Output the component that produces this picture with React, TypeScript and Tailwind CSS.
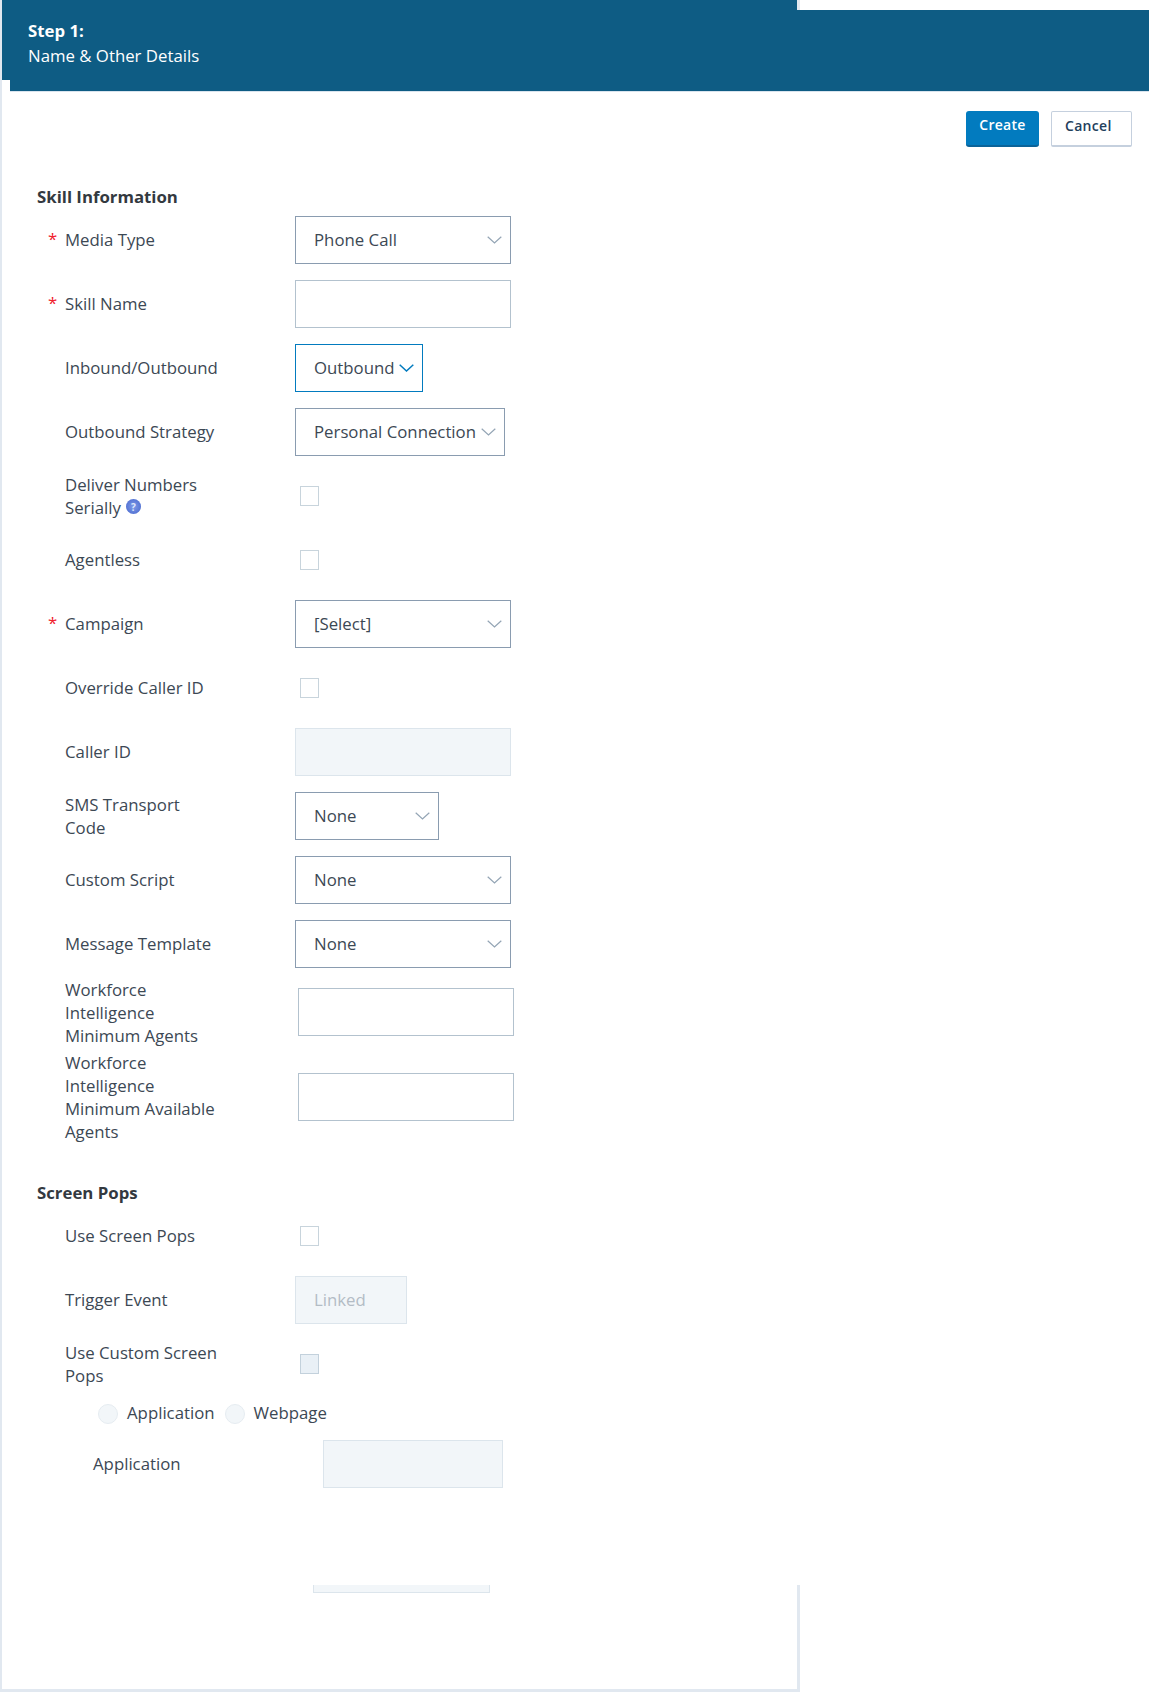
import { ReactNode } from 'react';

function Chevron({ active }: { active?: boolean }) {
  return (
    <svg
      width="15"
      height="8"
      viewBox="0 0 15 8"
      fill="none"
      className={active ? 'shrink-0 text-[#027bbf]' : 'shrink-0 text-[#94a5b5]'}
    >
      <path d="M0.7 0.7L7.5 7L14.3 0.7" stroke="currentColor" strokeWidth={active ? 1.5 : 1.2} />
    </svg>
  );
}

function Select({ value, width, active }: { value: string; width: string; active?: boolean }) {
  return (
    <div
      className={`flex h-12 items-center justify-between border bg-white pl-[18px] pr-[8px] ${width} ${
        active ? 'border-[#027bbf]' : 'border-[#8a9cb0]'
      }`}
    >
      <span className="whitespace-nowrap">{value}</span>
      <Chevron active={active} />
    </div>
  );
}

function TextBox({ disabled, value, className = '' }: { disabled?: boolean; value?: string; className?: string }) {
  return (
    <div
      className={`flex h-12 items-center border pl-[18px] ${
        disabled ? 'border-[#dce5ec] bg-[#f2f6f9] text-[#b3bcc5]' : 'border-[#b3c2ce] bg-white'
      } ${className}`}
    >
      {value}
    </div>
  );
}

function Check({ filled }: { filled?: boolean }) {
  return (
    <div
      className={`ml-[5px] h-5 w-[19px] border ${filled ? 'border-[#c3d1dc] bg-[#e9f0f6]' : 'border-[#c8d4dc] bg-white'}`}
    />
  );
}

function Row({
  label,
  required,
  className = 'mb-4 h-12',
  labelClass = '-mt-[2px]',
  children,
}: {
  label: ReactNode;
  required?: boolean;
  className?: string;
  labelClass?: string;
  children?: ReactNode;
}) {
  return (
    <div className={`flex items-center ${className}`}>
      <div className="w-[17px] shrink-0 text-[#f0202c]">
        {required && <span className="relative -top-[1px]">*</span>}
      </div>
      <div className="w-[230px] shrink-0">
        <div className={`w-[156px] leading-[23px] ${labelClass}`}>{label}</div>
      </div>
      {children}
    </div>
  );
}

function Radio({ label }: { label: string }) {
  return (
    <div className="flex items-center">
      <div className="h-5 w-5 rounded-full border border-[#e6ecf1] bg-[#f2f6f9]" />
      <span className="relative -top-px ml-[9px]">{label}</span>
    </div>
  );
}

export default function App() {
  return (
    <div className="h-[1692px] w-[1161px] overflow-hidden bg-white font-['Open_Sans',sans-serif] text-[16.8px] text-[#3c4854]">
      <div className="relative h-[1692px] w-[800px] border-b-[3px] border-l-2 border-[#e1e8f0]">
        <header className="relative h-[92px] w-[1147px] border-b border-[#d9e4ee] bg-[#0e5c84] pl-[26px] pt-[18px] leading-[25px] text-white">
          <div className="font-bold">Step 1:</div>
          <div>Name &amp; Other Details</div>
          <div className="absolute left-[795px] top-0 h-[10px] w-[352px] border-l-[3px] border-[#e1e8f0] bg-white" />
          <div className="absolute -bottom-px left-0 h-[12px] w-[8px] bg-white" />
        </header>

        <div className="mt-[19px] flex w-[1147px] justify-end gap-3 pr-[17px]">
          <button className="h-9 w-[73px] rounded-[3px] border-b-2 border-[#0b6399] bg-[#027bbf] pb-[7px] text-sm font-semibold tracking-[0.3px] text-white">
            Create
          </button>
          <button className="h-9 w-[81px] rounded-[2px] border border-b-2 border-[#c5d0de] bg-white pb-[5px] pl-[13px] text-left text-sm font-semibold tracking-[0.3px] text-[#23405c]">
            Cancel
          </button>
        </div>

        <div className="pl-[46px]">
          <h2 className="-ml-[11px] mb-[8px] mt-[39px] h-[22px] font-bold leading-[22px] text-[#33393f]">
            Skill Information
          </h2>

          <Row label="Media Type" required>
            <Select value="Phone Call" width="w-[216px]" />
          </Row>
          <Row label="Skill Name" required>
            <TextBox className="w-[216px]" />
          </Row>
          <Row label="Inbound/Outbound">
            <Select value="Outbound" width="w-[128px]" active />
          </Row>
          <Row label="Outbound Strategy">
            <Select value="Personal Connection" width="w-[210px]" />
          </Row>
          <Row
            labelClass=""
            label={
              <>
                Deliver Numbers Serially
                <span className="relative -top-[3px] ml-[5px] inline-flex h-[15px] w-[15px] items-center justify-center rounded-full bg-[radial-gradient(circle,#7f9be8,#4565cc)] align-middle text-[10px] font-bold leading-none text-[#dfe7fa]">
                  ?
                </span>
              </>
            }
          >
            <Check />
          </Row>
          <Row label="Agentless">
            <Check />
          </Row>
          <Row label="Campaign" required>
            <Select value="[Select]" width="w-[216px]" />
          </Row>
          <Row label="Override Caller ID">
            <Check />
          </Row>
          <Row label="Caller ID">
            <TextBox disabled className="w-[216px]" />
          </Row>
          <Row label="SMS Transport Code" labelClass="">
            <Select value="None" width="w-[144px]" />
          </Row>
          <Row label="Custom Script">
            <Select value="None" width="w-[216px]" />
          </Row>
          <Row label="Message Template" className="mb-[10px] h-12">
            <Select value="None" width="w-[216px]" />
          </Row>
          <Row label="Workforce Intelligence Minimum Agents" labelClass="" className="mb-[5px] h-[69px]">
            <TextBox className="-mt-[2px] ml-[3px] w-[216px]" />
          </Row>
          <Row label="Workforce Intelligence Minimum Available Agents" className="h-[92px]">
            <TextBox className="-mt-[2px] ml-[3px] w-[216px]" />
          </Row>

          <h2 className="-ml-[11px] mb-[8px] mt-[38px] h-[22px] font-bold leading-[22px] text-[#33393f]">
            Screen Pops
          </h2>

          <Row label="Use Screen Pops">
            <Check />
          </Row>
          <Row label="Trigger Event">
            <TextBox disabled value="Linked" className="w-[112px]" />
          </Row>
          <Row label="Use Custom Screen Pops" labelClass="">
            <Check filled />
          </Row>

          <div className="mb-4 ml-[50px] flex h-5 items-center gap-[10px]">
            <Radio label="Application" />
            <Radio label="Webpage" />
          </div>

          <div className="flex h-12 items-center pl-[45px]">
            <span className="w-[230px]">Application</span>
            <TextBox disabled className="w-[180px]" />
          </div>

          <div className="ml-[265px] mt-[97px] h-[8px] w-[177px] border-x border-b border-[#dce5ec] bg-[#f2f6f9]" />
        </div>

        <div className="absolute bottom-0 right-0 h-[104px] w-[3px] bg-[#e1e8f0]" />
      </div>
    </div>
  );
}
